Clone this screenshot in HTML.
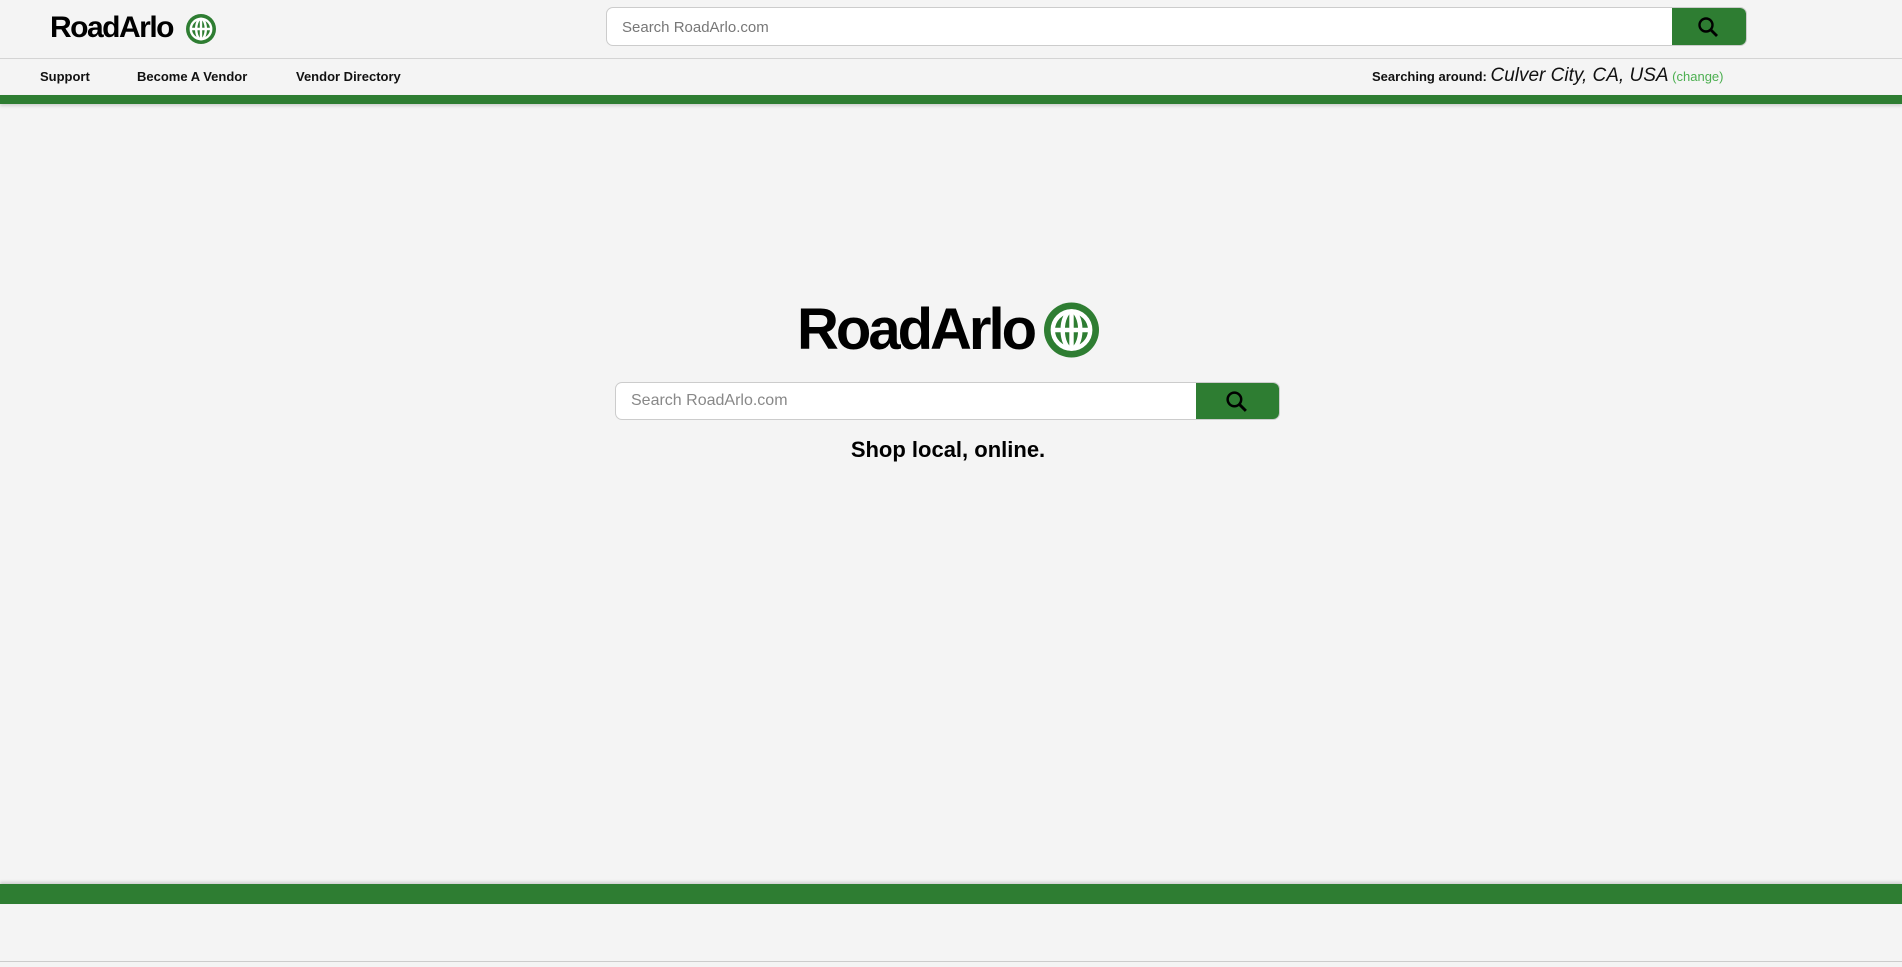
<!DOCTYPE html>
<html><head><meta charset="utf-8"><style>
body{margin:0;width:1902px;height:967px;background:#f4f4f4;font-family:"Liberation Sans",sans-serif;position:relative;overflow:hidden}
.abs{position:absolute}
.logo{font-weight:bold;color:#000;letter-spacing:-1px;white-space:nowrap}
</style></head><body>
<svg width="0" height="0" style="position:absolute"><defs>
<symbol id="g" viewBox="0 0 100 100"><circle cx="50" cy="50" r="50" fill="#2e7d32"/><g fill="none" stroke="#fff" stroke-width="8"><circle cx="50" cy="50" r="34"/><ellipse cx="50" cy="50" rx="16" ry="34"/><line x1="50" y1="16" x2="50" y2="84"/><line x1="16" y1="50" x2="84" y2="50"/></g></symbol>
<symbol id="s" viewBox="0 0 24 24"><circle cx="10" cy="10" r="6.5" fill="none" stroke="#000" stroke-width="2.4"/><line x1="14.6" y1="14.6" x2="21" y2="21" stroke="#000" stroke-width="2.8"/></symbol>
</defs></svg>

<div class="abs logo" style="left:50px;top:11px;font-size:30px;letter-spacing:-1.5px">RoadArlo</div>
<svg class="abs" style="left:186px;top:14px" width="30" height="30"><use href="#g"/></svg>

<div class="abs" style="left:606px;top:7px;width:1141px;height:39px;border:1px solid #ccc;border-radius:7px;background:#fff;box-sizing:border-box;overflow:hidden">
<span class="abs" style="left:15px;top:11px;font-size:15px;color:#777">Search RoadArlo.com</span>
<div class="abs" style="right:0;top:0;width:74px;height:39px;background:#2e7d32"><svg class="abs" style="left:24px;top:7px" width="24" height="24"><use href="#s"/></svg></div>
</div>
<div class="abs" style="left:0;top:58px;width:1902px;height:1px;background:#d4d4d4"></div>
<div class="abs" style="top:69px;left:40px;font-size:13px;font-weight:bold;color:#111">Support</div>
<div class="abs" style="top:69px;left:137px;font-size:13px;font-weight:bold;color:#111">Become A Vendor</div>
<div class="abs" style="top:69px;left:296px;font-size:13px;font-weight:bold;color:#111">Vendor Directory</div>
<div class="abs" style="top:65px;left:1372px;font-size:13px;font-weight:bold;color:#111;white-space:nowrap">Searching around: <span style="font-weight:normal;font-style:italic;font-size:19px">Culver City, CA, USA</span> <span style="font-weight:normal;color:#4caf50;font-size:13px">(change)</span></div>
<div class="abs" style="left:0;top:95px;width:1902px;height:9px;background:#2e7d32;box-shadow:0 2px 3px rgba(0,0,0,.15)"></div>

<div class="abs logo" style="left:797px;top:296px;font-size:58px;letter-spacing:-3px">RoadArlo</div>
<svg class="abs" style="left:1044px;top:302px" width="55" height="56"><use href="#g"/></svg>

<div class="abs" style="left:615px;top:382px;width:665px;height:38px;border:1px solid #ccc;border-radius:7px;background:#fff;box-sizing:border-box;overflow:hidden">
<span class="abs" style="left:15px;top:9px;font-size:16px;color:#888">Search RoadArlo.com</span>
<div class="abs" style="right:0;top:0;width:83px;height:38px;background:#2e7d32"><svg class="abs" style="left:28px;top:6px" width="25" height="25"><use href="#s"/></svg></div>
</div>
<div class="abs" style="left:0;width:1896px;top:437px;text-align:center;font-size:22px;font-weight:bold;color:#000">Shop local, online.</div>

<div class="abs" style="left:0;top:884px;width:1902px;height:20px;background:#2e7d32;box-shadow:0 -2px 3px rgba(0,0,0,.15)"></div>
<div class="abs" style="left:0;top:961px;width:1902px;height:1px;background:#ccc"></div>
</body></html>
